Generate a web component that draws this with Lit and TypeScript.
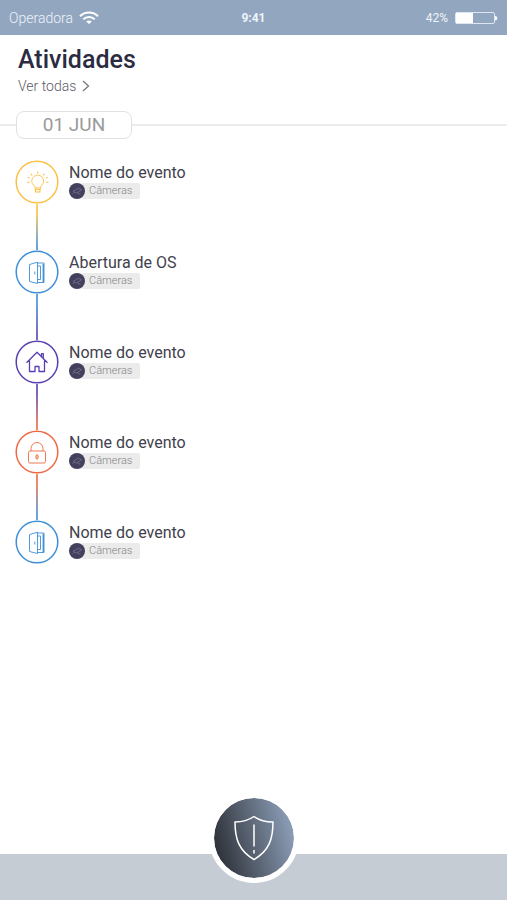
import { LitElement, html, svg, css, TemplateResult } from "lit";
import { customElement, property } from "lit/decorators.js";

type Kind = "light" | "door" | "home" | "lock";

interface ActivityEvent {
  kind: Kind;
  title: string;
  source: string;
}

const COLORS: Record<Kind, string> = {
  light: "#fbc145",
  door: "#3f8fd8",
  home: "#5a3fb0",
  lock: "#ee6a45",
};

const GLYPHS: Record<Kind, TemplateResult> = {
  light: svg`
    <path d="M20 29.500v-2.300c0-1.500-3.300-2.500-3.300-6a6 6 0 0 1 12 0c0 3.500-3.300 4.500-3.300 6v2.300z"/>
    <path d="M20 28h5.400M20.500 29.500v2.500h4.400v-2.500M22.700 11.500v2M16 13.800l1.200 1.500M29.400 13.800l-1.200 1.500M11.800 22.300h2.700M31 22.300h2.700M12.800 17.300l1.700.7M32.600 17.300l-1.700.7" stroke-width="1.100"/>`,
  door: svg`
    <path d="M14.500 14.500l8-2.300v21.300l-8-2z"/>
    <path d="M22.500 13h6.500v19.500h-6.500M25.500 16v13.500M22.500 16h3M22.500 29.500h3M19.800 21.500v3"/>
    <path d="M28.300 14v18.500" stroke-width="1.400"/>`,
  home: svg`
    <path d="M11.500 22.700L22 12.300l10.500 10.400M26.500 16.700v-3H28.300v4.800M14.500 20.500v11h5.500v-5h4v5h5.500v-11" stroke-width="1.300"/>`,
  lock: svg`
    <rect x="13.500" y="21" width="17" height="12" rx="1.500"/>
    <path d="M16 21v-2.500a6 6 0 0 1 12 0v2.500M22 24.500c-2 1.500-1.500 3.500 0 4.800c1.500-1.300 2-3.300 0-4.800zM22 24.500v5"/>`,
};

@customElement("event-item")
export class EventItem extends LitElement {
  @property({ attribute: false }) event!: ActivityEvent;
  @property({ attribute: false }) next?: Kind;

  static styles = css`
    :host {
      display: flex;
      gap: 10px;
    }
    .rail {
      display: flex;
      flex-direction: column;
      align-items: center;
      width: 44px;
      flex: none;
    }
    .badge {
      display: block;
      width: 44px;
      height: 44px;
    }
    .line {
      width: 2px;
      height: 46px;
      opacity: 0.8;
    }
    .body {
      display: flex;
      flex-direction: column;
      align-items: flex-start;
      padding-top: 3px;
    }
    .title {
      margin: 0;
      font-size: 16px;
      line-height: 20px;
      font-weight: 400;
      color: #3f414d;
    }
    .tag {
      display: flex;
      align-items: center;
    }
    .cam {
      display: block;
      width: 16px;
      height: 16px;
      flex: none;
      z-index: 1;
    }
    .label {
      margin-left: -4px;
      padding: 0 8px;
      border-radius: 2px;
      background: #ebebeb;
      font-size: 11px;
      line-height: 16px;
      font-weight: 300;
      color: #858585;
    }
  `;

  render() {
    const { kind, title, source } = this.event;
    const color = COLORS[kind];
    return html`
      <div class="rail">
        <svg class="badge" viewBox="0 0 44 44" fill="none" stroke=${color}
          stroke-linejoin="round" aria-hidden="true">
          <circle cx="22" cy="22" r="20.800" stroke-width="1.500" />
          <g stroke-width="0.900">${GLYPHS[kind]}</g>
        </svg>
        ${this.next
          ? html`<div class="line"
              style="background:linear-gradient(${color} 20%, ${COLORS[this.next]} 90%)"></div>`
          : null}
      </div>
      <div class="body">
        <h2 class="title">${title}</h2>
        <div class="tag">
          <svg class="cam" viewBox="0 0 16 16" fill="none" aria-hidden="true">
            <circle cx="8" cy="8" r="8" fill="#42405c" />
            <path d="M4 8.500l5.500-3.300l3 1.600L7.500 10zM5 9.500l-1.500 1.500M9 9.500l.500 1.500h2"
              stroke="#77758f" stroke-width="0.800" />
          </svg>
          <span class="label">${source}</span>
        </div>
      </div>
    `;
  }
}

@customElement("app-root")
export class AppRoot extends LitElement {
  private events: ActivityEvent[] = [
    { kind: "light", title: "Nome do evento", source: "Câmeras" },
    { kind: "door", title: "Abertura de OS", source: "Câmeras" },
    { kind: "home", title: "Nome do evento", source: "Câmeras" },
    { kind: "lock", title: "Nome do evento", source: "Câmeras" },
    { kind: "door", title: "Nome do evento", source: "Câmeras" },
  ];

  static styles = css`
    :host {
      display: flex;
      flex-direction: column;
      min-height: 100vh;
      background: #fff;
      font-family: Roboto, "Liberation Sans", sans-serif;
      color: #2b2b42;
    }
    .status {
      display: grid;
      grid-template-columns: 1fr auto 1fr;
      align-items: center;
      height: 35px;
      padding: 0 9px;
      background: #93a6c0;
      color: #eef3fa;
      font-size: 12px;
    }
    .carrier,
    .power {
      display: flex;
      align-items: center;
      gap: 6px;
    }
    .carrier {
      font-size: 14px;
      font-weight: 300;
    }
    .power {
      justify-content: flex-end;
    }
    .time {
      font-weight: 700;
    }
    svg {
      display: block;
    }
    .head {
      padding: 10px 18px 0;
    }
    .heading {
      margin: 0;
      font-size: 25px;
      line-height: 30px;
      font-weight: 500;
    }
    .all {
      display: inline-flex;
      align-items: center;
      gap: 6px;
      font-size: 14px;
      line-height: 20px;
      margin-top: 1px;
      font-weight: 300;
      color: #5c5c66;
      text-decoration: none;
    }
    .day {
      display: flex;
      align-items: center;
      margin: 15px 0 21px;
    }
    .day::before,
    .day::after {
      content: "";
      height: 2px;
      background: #ececec;
    }
    .day::before {
      width: 16px;
    }
    .day::after {
      flex: 1;
    }
    .date {
      box-sizing: border-box;
      width: 116px;
      border: 1px solid #e2e2e2;
      border-radius: 8px;
      font-size: 19px;
      line-height: 26px;
      text-align: center;
      color: #9a9a9a;
    }
    .list {
      flex: 1;
      margin: 0;
      padding: 0 15px 80px;
      list-style: none;
    }
    .bar {
      display: flex;
      justify-content: center;
      height: 46px;
      background: #c6ccd4;
    }
    .alert {
      display: grid;
      place-items: center;
      box-sizing: border-box;
      width: 90px;
      height: 90px;
      margin-top: -61px;
      padding: 0;
      border: 5px solid #fff;
      border-radius: 50%;
      background: linear-gradient(75deg, #272a30 8%, #5a6473 48%, #9aafcc 98%) border-box;
      background-clip: padding-box;
    }
  `;

  render() {
    return html`
      <header class="status">
        <span class="carrier">
          Operadora
          <svg width="20" height="14" viewBox="0 0 20 14" fill="none" stroke="#fff"
            stroke-width="2" role="img" aria-label="Wi-Fi">
            <path d="M1 5.200C6 .300 14 .300 19 5.200M4.300 8.300c3.300-3.200 8.100-3.200 11.400 0" />
            <path d="M7.200 10.500c1.600-1.500 4-1.500 5.600 0L10 13z" fill="#fff" stroke="none" />
          </svg>
        </span>
        <span class="time">9:41</span>
        <span class="power">
          42%
          <svg width="44" height="14" viewBox="0 0 44 14" role="img" aria-label="Bateria">
            <rect x="1.500" y="1.500" width="39" height="11" rx="1.500" fill="none"
              stroke="#dde7f4" />
            <rect x="2" y="2" width="17" height="10" fill="#fff" />
            <path d="M41 5a2 2 0 0 1 0 4.500z" fill="#fff" />
          </svg>
        </span>
      </header>
      <div class="head">
        <h1 class="heading">Atividades</h1>
        <a class="all" href="#todas">
          Ver todas
          <svg width="8" height="12" viewBox="0 0 8 12" fill="none" stroke="#777780"
            stroke-width="1.300" aria-hidden="true">
            <path d="M1 1l5.500 5L1 11" />
          </svg>
        </a>
      </div>
      <div class="day"><time class="date">01 JUN</time></div>
      <ul class="list">
        ${this.events.map(
          (e, i) => html`<li>
            <event-item .event=${e} .next=${this.events[i + 1]?.kind}></event-item>
          </li>`
        )}
      </ul>
      <nav class="bar">
        <button class="alert" type="button" aria-label="Alerta">
          <svg width="40" height="46" viewBox="0 0 40 46" fill="none" stroke="#fff"
            stroke-width="1.500" stroke-linejoin="round">
            <path d="M20 1.500C15 5 8 7 1 7c0 17 4 29 19 37.500C35 36 39 24 39 7C32 7 25 5 20 1.500z" />
            <path d="M20 9.500v22M20 35v3.500" />
          </svg>
        </button>
      </nav>
    `;
  }
}
